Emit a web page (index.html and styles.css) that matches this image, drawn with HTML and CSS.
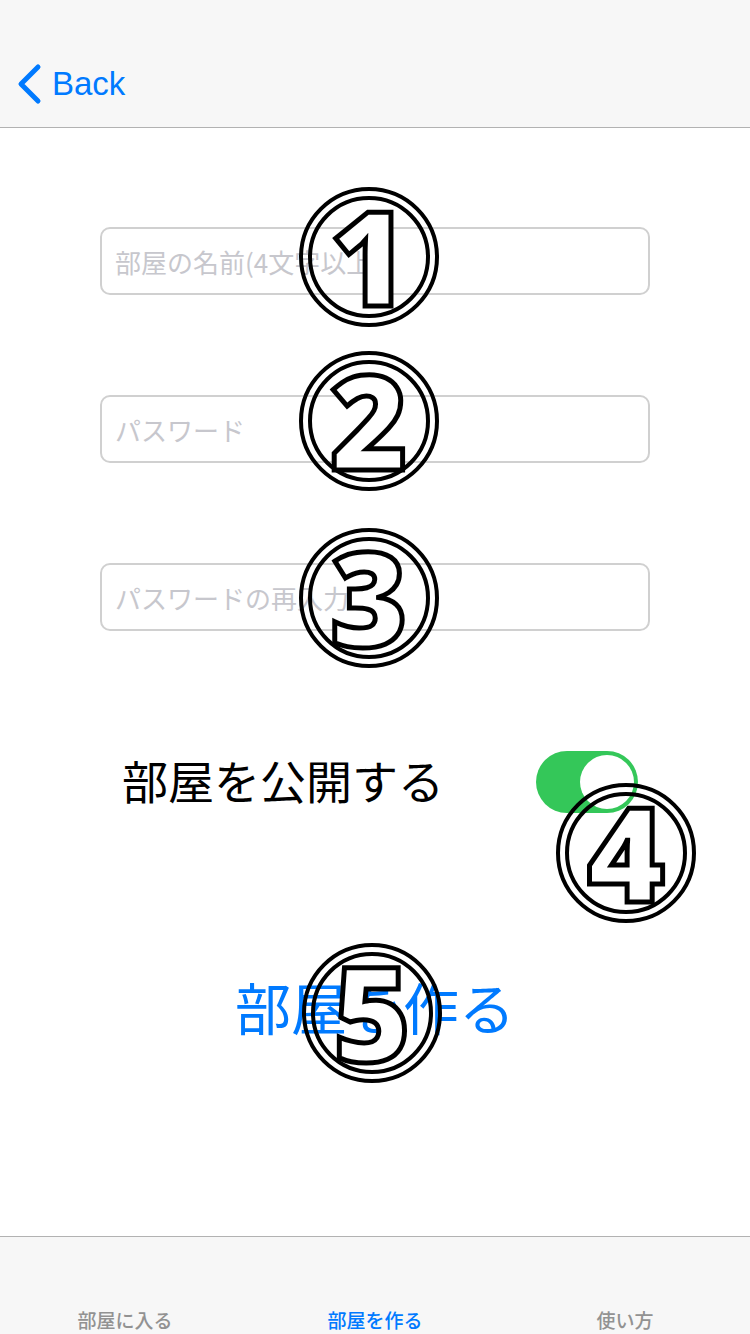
FILE: index.html
```html
<!DOCTYPE html>
<html lang="ja">
<head>
<meta charset="utf-8">
<title>部屋を作る</title>
<link rel="stylesheet" href="styles.css">
</head>
<body>
<div class="screen">
  <header class="navbar">
    <a class="back" href="#">
      <svg class="chev" width="30" height="44" viewBox="0 0 30 44" aria-hidden="true">
        <path d="M21 5 L4 22 L21 39" fill="none" stroke="#007aff" stroke-width="5" stroke-linecap="round" stroke-linejoin="round"/>
      </svg>
      <span class="back-label">Back</span>
    </a>
  </header>

  <main class="content">
    <input class="field" type="text" placeholder="部屋の名前(4文字以上)">
    <input class="field" type="password" placeholder="パスワード">
    <input class="field" type="password" placeholder="パスワードの再入力">

    <div class="toggle-row">
      <span class="toggle-label">部屋を公開する</span>
      <span class="switch"><span class="knob"></span></span>
    </div>

    <button class="create" type="button">部屋を作る</button>
  </main>

  <nav class="tabbar">
    <span class="tab">部屋に入る</span>
    <span class="tab active">部屋を作る</span>
    <span class="tab">使い方</span>
  </nav>

  <span class="mark m1"><span class="digit">1</span></span>
  <span class="mark m2"><span class="digit">2</span></span>
  <span class="mark m3"><span class="digit">3</span></span>
  <span class="mark m4"><span class="digit">4</span></span>
  <span class="mark m5"><span class="digit">5</span></span>
</div>
</body>
</html>
```

FILE: styles.css
```css
html, body {
  margin: 0;
  padding: 0;
  background: #ffffff;
}

.screen {
  position: relative;
  width: 750px;
  height: 1334px;
  display: flex;
  flex-direction: column;
  overflow: hidden;
  font-family: "Noto Sans CJK JP", "Noto Sans", sans-serif;
}

.navbar {
  height: 128px;
  box-sizing: border-box;
  padding-top: 40px;
  background: #f7f7f7;
  border-bottom: 1px solid #b2b2b2;
  display: flex;
  align-items: center;
}

.back {
  display: flex;
  align-items: center;
  text-decoration: none;
  color: #007aff;
  margin-left: 17px;
}

.chev {
  display: block;
}

.back-label {
  font-family: "Liberation Sans", Arial, sans-serif;
  font-size: 33px;
  margin-left: 5px;
}

.content {
  flex: 1;
  display: flex;
  flex-direction: column;
  align-items: center;
  padding-top: 99px;
}

.field {
  width: 550px;
  height: 68px;
  box-sizing: border-box;
  border: 2px solid #d0d0d0;
  border-radius: 10px;
  padding: 0 13px;
  margin: 0 0 100px 0;
  font-family: "Noto Sans CJK JP", sans-serif;
  font-size: 26px;
  background: #ffffff;
  outline: none;
}

.field::placeholder {
  color: #c7c7cd;
}

.toggle-row {
  width: 750px;
  box-sizing: border-box;
  margin-top: 20px;
  padding-left: 122px;
  display: flex;
  align-items: center;
}

.toggle-label {
  font-size: 46px;
  line-height: 1;
  color: #000000;
  width: 414px;
  position: relative;
  top: -3px;
}

.switch {
  width: 102px;
  height: 62px;
  border-radius: 31px;
  background: #34c759;
  display: flex;
  align-items: center;
  justify-content: flex-end;
  padding: 0 4px;
  box-sizing: border-box;
}

.knob {
  width: 54px;
  height: 54px;
  border-radius: 50%;
  background: #ffffff;
}

.create {
  margin-top: 165px;
  border: none;
  background: none;
  padding: 0;
  font-family: "Noto Sans CJK JP", sans-serif;
  font-size: 56px;
  line-height: 1;
  color: #007aff;
}

.tabbar {
  height: 98px;
  box-sizing: border-box;
  border-top: 1px solid #b2b2b2;
  background: #f7f7f7;
  display: grid;
  grid-template-columns: repeat(3, 1fr);
  align-items: end;
  padding-bottom: 5px;
}

.tab {
  text-align: center;
  font-size: 19px;
  line-height: 1;
  font-weight: 500;
  color: #929292;
}

.tab.active {
  color: #007aff;
}

/* annotation markers overlaid on the screen */
.mark {
  position: absolute;
  width: 140px;
  height: 140px;
  box-sizing: border-box;
  border: 13px double #000000;
  border-radius: 50%;
  display: flex;
  align-items: center;
  justify-content: center;
  transform: translate(-50%, -50%);
}

.digit {
  font-family: "Noto Sans", "DejaVu Sans", sans-serif;
  font-weight: 900;
  font-size: 132px;
  line-height: 1;
  color: #ffffff;
  -webkit-text-stroke: 5px #000000;
  position: relative;
  top: -2px;
}

.m1 { left: 369px; top: 257px; }
.m2 { left: 369px; top: 421px; }
.m3 { left: 369px; top: 598px; }
.m4 { left: 626px; top: 853px; }
.m5 { left: 372px; top: 1013px; }
```
